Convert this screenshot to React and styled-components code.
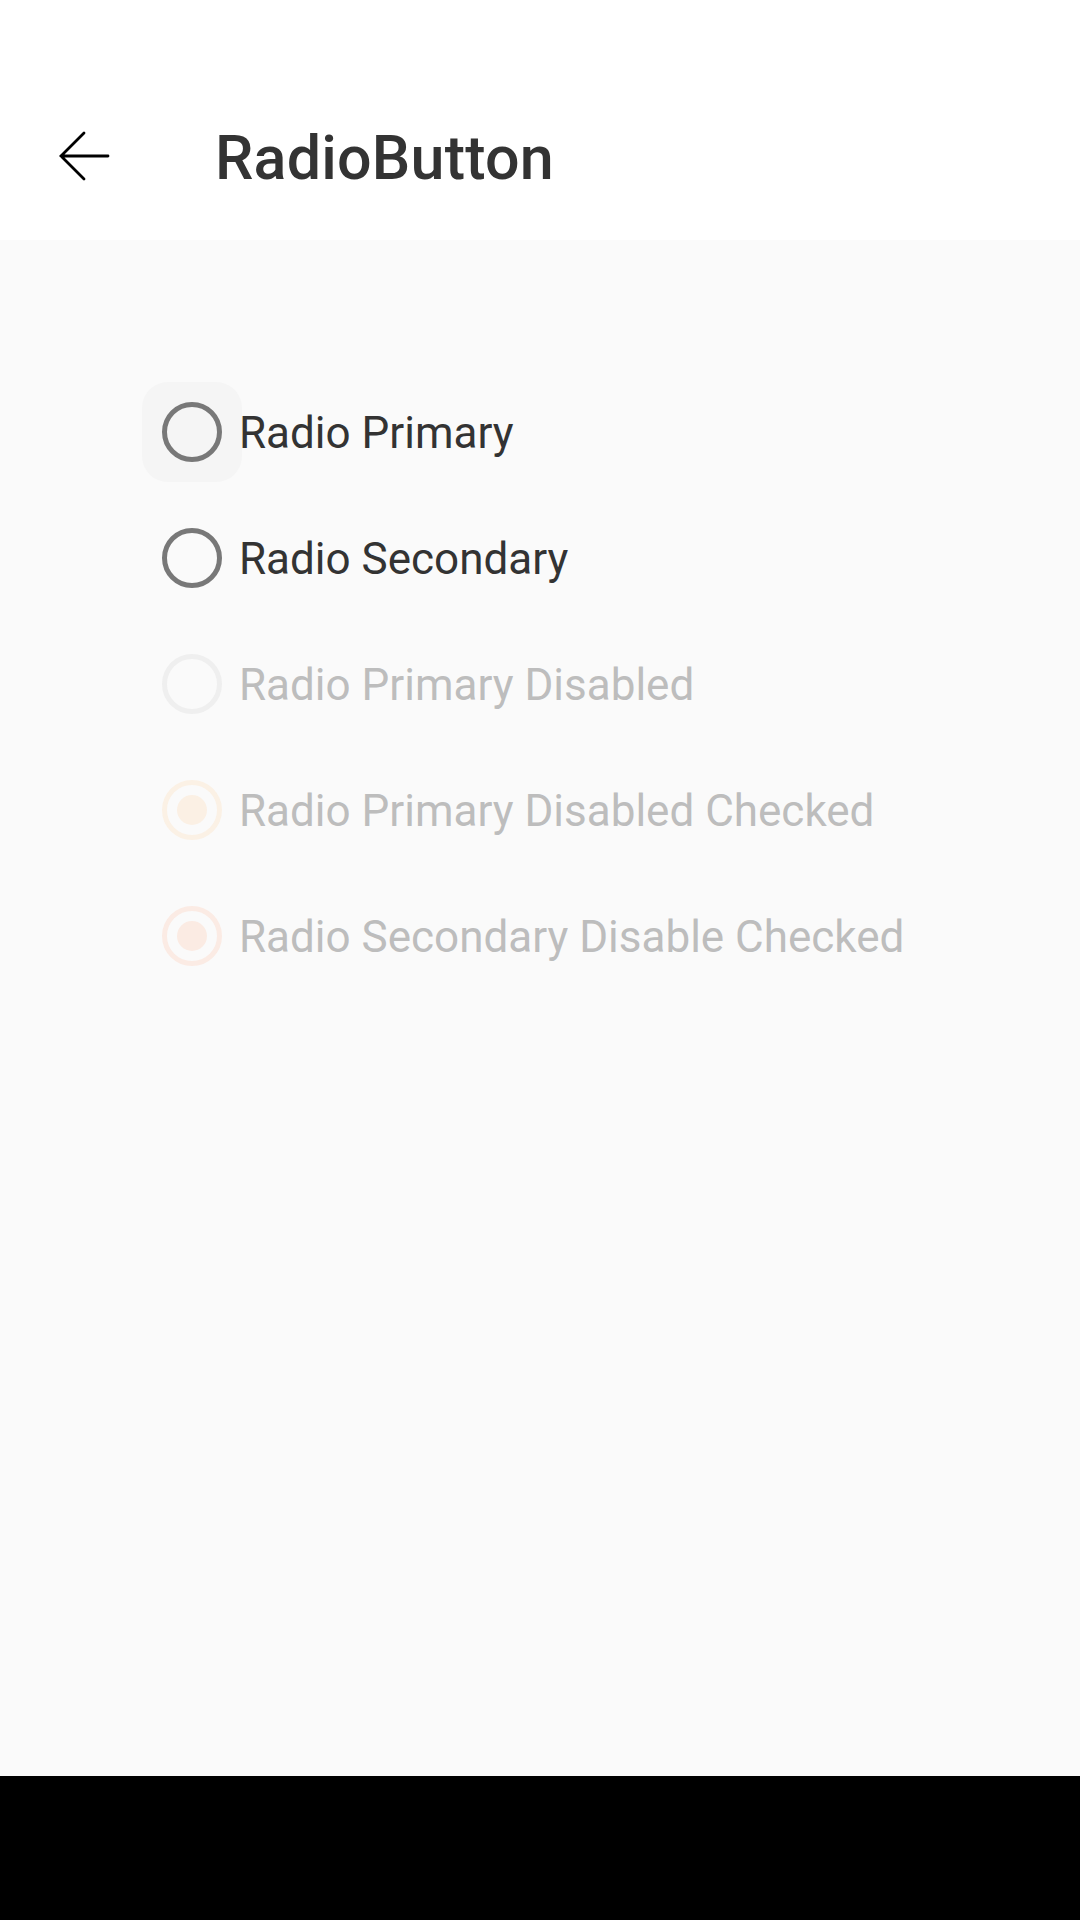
import React from "react";
import styled, { createGlobalStyle } from "styled-components";

const Global = createGlobalStyle`
  html, body { margin: 0; padding: 0; background: #fafafa; }
  body { font-family: Roboto, "Noto Sans", "Liberation Sans", sans-serif; }
  * { box-sizing: border-box; }
`;

const Page = styled.div`
  width: 1080px;
  height: 1920px;
  display: flex;
  flex-direction: column;
  background: #fafafa;
  overflow: hidden;
`;

const Header = styled.header`
  height: 240px;
  background: #ffffff;
  padding-top: 72px;
  flex-shrink: 0;
`;

const Toolbar = styled.div`
  height: 168px;
  display: flex;
  align-items: center;
`;

const BackButton = styled.button`
  width: 52px;
  height: 52px;
  margin-left: 58px;
  padding: 0;
  border: none;
  background: transparent;
  display: flex;
  align-items: center;
  justify-content: center;
`;

const Title = styled.h1`
  margin: 4px 0 0 105px;
  font-family: Roboto, "Liberation Sans", sans-serif;
  font-size: 61px;
  font-weight: 500;
  line-height: 1;
  color: #333333;
  letter-spacing: 0.2px;
`;

const Content = styled.main`
  flex: 1;
  padding-top: 129px;
  display: flex;
  flex-direction: column;
`;

const Row = styled.label`
  height: 126px;
  display: flex;
  align-items: center;
  padding-left: 142px;
`;

const Control = styled.span`
  width: 100px;
  height: 100px;
  border-radius: 26px;
  background: ${(p) => (p.$focused ? "#f5f5f5" : "transparent")};
  display: flex;
  align-items: center;
  justify-content: center;
  margin-top: -1px;
`;

const Ring = styled.span`
  width: 60px;
  height: 60px;
  border-radius: 50%;
  border: 5.5px solid ${(p) => p.$ring};
  display: flex;
  align-items: center;
  justify-content: center;
`;

const Dot = styled.span`
  width: 30px;
  height: 30px;
  border-radius: 50%;
  background: ${(p) => p.$color};
`;

const Label = styled.span`
  font-size: 44px;
  line-height: 1.17;
  padding-top: 4px;
  margin-left: -3px;
  color: ${(p) => (p.$disabled ? "#bdbdbd" : "#333333")};
  letter-spacing: 0;
`;

const NavBar = styled.div`
  height: 144px;
  background: #000000;
  flex-shrink: 0;
`;

const items = [
  { label: "Radio Primary", ring: "#787878", focused: true },
  { label: "Radio Secondary", ring: "#787878" },
  { label: "Radio Primary Disabled", ring: "#efefef", disabled: true },
  { label: "Radio Primary Disabled Checked", ring: "#fbf1e5", dot: "#fbf0e4", disabled: true },
  { label: "Radio Secondary Disable Checked", ring: "#fbebe4", dot: "#fbebe3", disabled: true },
];

export default function App() {
  return (
    <>
      <Global />
      <Page>
        <Header>
          <Toolbar>
            <BackButton aria-label="Back">
              <svg width="52" height="52" viewBox="0 0 52 52" fill="none">
                <path
                  d="M50 26H3M26 3L3 26L26 49"
                  stroke="#000"
                  strokeWidth="2.8"
                  strokeLinecap="round"
                  strokeLinejoin="miter"
                />
              </svg>
            </BackButton>
            <Title>RadioButton</Title>
          </Toolbar>
        </Header>
        <Content>
          {items.map((it) => (
            <Row key={it.label}>
              <Control $focused={it.focused}>
                <Ring $ring={it.ring}>{it.dot && <Dot $color={it.dot} />}</Ring>
              </Control>
              <Label $disabled={it.disabled}>{it.label}</Label>
            </Row>
          ))}
        </Content>
        <NavBar />
      </Page>
    </>
  );
}
